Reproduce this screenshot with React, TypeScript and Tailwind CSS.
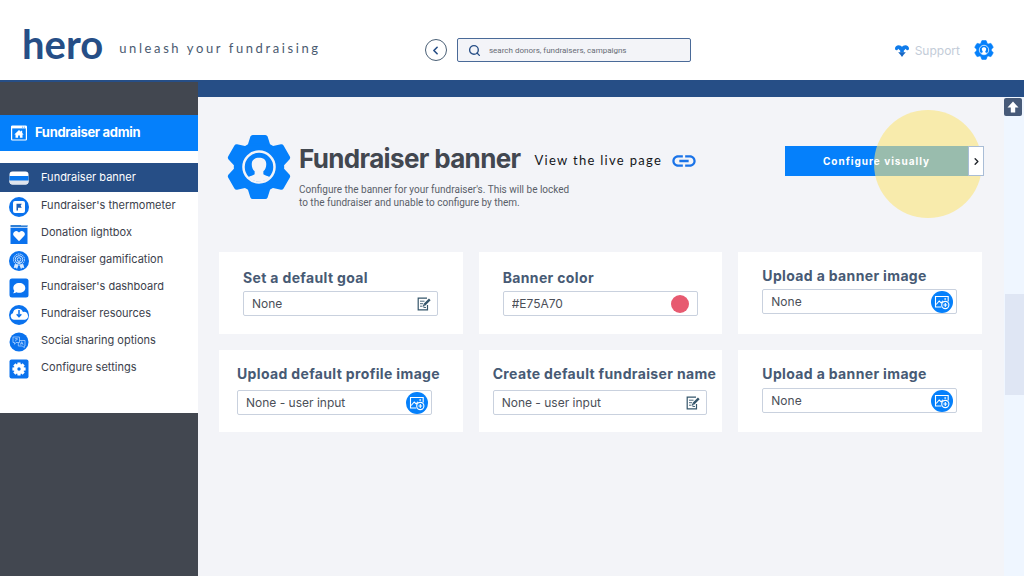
import { type ReactNode } from 'react'
import { ChevronLeft, ChevronRight, Search } from 'lucide-react'
import { MdLink } from 'react-icons/md'

// ─────────────────────────────────────────────────────────────
// Icons
// ─────────────────────────────────────────────────────────────

function UserGear({ className, face }: { className: string; face: string }) {
  const tooth = 'M-10.500-23 L-8-31 Q-7.500-32-6.500-32 L6.500-32 Q7.500-32 8-31 L10.500-23Z'
  return (
    <svg className={className} viewBox="-33 -34 66 68" aria-hidden="true">
      <g fill="#0580fb" stroke="#0580fb" strokeWidth="2" strokeLinejoin="round">
        <circle r="25" />
        {[0, 60, 120, 180, 240, 300].map((deg) => (
          <path key={deg} d={tooth} transform={`rotate(${deg})`} />
        ))}
      </g>
      <circle r="16" fill="none" stroke={face} strokeWidth="2.600" />
      <path
        fill={face}
        d="M-7.500-3 C-7.500-8-4-9.500 0-9.500 S7.500-8 7.500-3 C7.500 0 6.500 3 4.500 4.500 V7.500 C6 9 9 9 11 10.500 A16 16 0 0 1-11 10.500 C-9 9-6 9-4.500 7.500 V4.500 C-6.500 3-7.500 0-7.500-3Z"
      />
    </svg>
  )
}

function NavSvg({ children }: { children: ReactNode }) {
  return (
    <svg className="h-5 w-5 shrink-0" viewBox="0 0 20 20" fill="none" aria-hidden="true">
      {children}
    </svg>
  )
}

const bannerIcon = (
  <NavSvg>
    <rect x="0.500" y="3.500" width="19" height="13" rx="3" fill="#fff" />
    <path d="M.5 12h19v1.500a3 3 0 0 1-3 3h-13a3 3 0 0 1-3-3z" fill="#dfe5ee" />
    <path d="M.5 8h19v4.500H.5z" fill="#0a78ef" />
  </NavSvg>
)

const thermometerIcon = (
  <NavSvg>
    <circle cx="10" cy="10" r="10" fill="#0a72ee" />
    <rect x="4" y="4" width="12" height="12" rx="2" fill="#fff" />
    <path d="M7.500 13.500V6.800h5.300l-1.200 2 1.200 2H9v2.700z" fill="#1c5fb8" />
  </NavSvg>
)

const lightboxIcon = (
  <NavSvg>
    <path d="M1.500 1h17v2h-17z" fill="#2f7fd6" />
    <path d="M1.500 3.700h17V20h-17z" fill="#0a72ee" />
    <path d="M12.500 1.500h1M14.500 1.500h1M16.500 1.500h1" stroke="#fff" strokeWidth="0.800" />
    <path d="M10 17.200 5.200 12.300a3 3 0 0 1 4.200-4.300l.6.600.6-.6a3 3 0 0 1 4.200 4.300z" fill="#fff" />
  </NavSvg>
)

const awardIcon = (
  <NavSvg>
    <circle cx="10" cy="10" r="10" fill="#0a72ee" />
    <g stroke="#d9ebff" strokeWidth="0.900">
      <circle cx="10" cy="8.500" r="5.500" strokeDasharray="1.600 0.600" />
      <circle cx="10" cy="8.500" r="3.800" />
      <circle cx="10" cy="8.500" r="1.800" />
      <path d="M9.200 10.500v2.500M10.800 10.500v2.500" />
      <path d="M6.300 13l-1.100 3.600 1.700-.4.900 1.200 1.300-3.600M13.700 13l1.100 3.600-1.700-.4-.9 1.200-1.300-3.600" fill="#d9ebff" />
    </g>
  </NavSvg>
)

const chatIcon = (
  <NavSvg>
    <rect x="0.500" y="0.500" width="19" height="19" rx="2.500" fill="#0a72ee" />
    <path d="M10.300 5c3.400 0 6 2.100 6 4.900s-2.600 4.900-6 4.900c-1 0-2-.2-2.900-.6-.9.700-2 1.100-3.300 1.100.7-.8 1.100-1.600 1.200-2.500-.7-.8-1-1.800-1-2.900C4.300 7.100 6.900 5 10.300 5z" fill="#fff" />
  </NavSvg>
)

const cloudIcon = (
  <NavSvg>
    <circle cx="10" cy="10" r="10" fill="#0a72ee" />
    <path d="M4.800 14.700a3.300 3.300 0 0 1-.9-6.400 5.200 5.200 0 0 1 10-1.200 3.900 3.900 0 0 1 2.200 7.600z" fill="#fff" />
    <path d="M10 5v6M7.700 9.200l2.300 2.500 2.300-2.500" stroke="#0a72ee" strokeWidth="1.500" />
  </NavSvg>
)

const sharingIcon = (
  <NavSvg>
    <circle cx="10" cy="10" r="9.500" fill="#0a72ee" />
    <g stroke="#a9d0ff" strokeWidth="0.800">
      <path d="M4 5h6.500v5.500H7l-1.500 1.800v-1.800H4z" />
      <path d="M10.500 8.500H16V14h-.8v1.700L13.500 14H9.300v-3.500" />
      <path d="M5.800 6.800h3M7.200 6v.8M8.300 7c-.4 1-1.200 1.600-2.200 2M11.300 12.700l1.400-3 1.400 3M11.800 11.700h1.800" />
    </g>
  </NavSvg>
)

const settingsIcon = (
  <NavSvg>
    <rect x="0.500" y="0.500" width="19" height="19" rx="2" fill="#0a72ee" />
    <g fill="#fff">
      <circle cx="10" cy="10" r="5" />
      {[0, 45, 90, 135, 180, 225, 270, 315].map((deg) => (
        <path key={deg} d="M8.200 6l.3-2.600h3l.3 2.600z" transform={`rotate(${deg} 10 10)`} />
      ))}
    </g>
    <circle cx="10" cy="10" r="1.700" fill="#0a72ee" />
  </NavSvg>
)

function AdminIcon() {
  return (
    <svg className="h-4 w-4 shrink-0" viewBox="0 0 16 16" fill="none" aria-hidden="true">
      <rect x="0.600" y="1" width="14.800" height="14" rx="0.800" stroke="#fff" strokeWidth="1.200" />
      <path d="M.6 1h14.800v2.400H.6z" fill="#fff" />
      <path d="M11 2.200h.8M12.800 2.200h1" stroke="#0580fb" strokeWidth="0.800" />
      <path d="M8 5 3.300 9.400h1.200v3.400h2.600v-2.300h1.800v2.300h2.600V9.400h1.200l-1.500-1.400V5.800H9.800v.9z" fill="#fff" />
    </svg>
  )
}

function SupportIcon() {
  return (
    <svg className="h-3 w-3.5" viewBox="0 0 14 12" aria-hidden="true">
      <g fill="#0f7bea">
        <path d="M0 3.600C0 1.600 1.600.2 3.600.2 5.200.2 6.500.9 7 2 7.500.9 8.800.2 10.400.2c2 0 3.600 1.400 3.600 3.400 0 1-.6 1.600-1.500 1.600s-1.500-.6-1.700-1.500L9 5.500H5L3.200 3.700C3 4.600 2.400 5.200 1.500 5.200S0 4.600 0 3.600z" />
        <path d="M5.200 4.500h3.600v3H5.200z" />
      </g>
      <path d="M3.200 7.200h7.600L8.600 9.800 7 12 5.400 9.800z" fill="#1767c4" />
    </svg>
  )
}

function EditIcon() {
  return (
    <svg className="h-3.5 w-3.5" viewBox="0 0 14 14" fill="none" stroke="#35566b" aria-hidden="true">
      <path d="M10 1.200H1.200v11.600h9.300V8" strokeWidth="1.200" />
      <path d="M3 4.200h4.500M3 6.700h3M3 9.200h2M6.500 10.500h2.500" strokeWidth="0.900" />
      <path d="M12.800 2.300 7.300 7.900" strokeWidth="2.400" />
      <path d="M5.700 9.600l.8-2 1.300 1.300z" fill="#35566b" strokeWidth="0.400" />
    </svg>
  )
}

function ImageIcon() {
  return (
    <svg className="h-[22px] w-[22px]" viewBox="0 0 22 22" fill="none" stroke="#fff" aria-hidden="true">
      <circle cx="11" cy="11" r="11" fill="#0580fb" stroke="none" />
      <path d="M10.500 16H4.500V5.500h12.700v5" strokeWidth="1.100" />
      <path d="M5.200 13.500 8.200 10l2 2 1.600-2.200" strokeWidth="1.100" />
      <circle cx="14.200" cy="8" r="0.700" fill="#fff" strokeWidth="0.400" />
      <circle cx="14.300" cy="14" r="3.600" fill="#0580fb" strokeWidth="1.100" />
      <path d="M14.300 12.100v3.800M12.400 14h3.800" strokeWidth="1.100" />
    </svg>
  )
}

// ─────────────────────────────────────────────────────────────
// Data
// ─────────────────────────────────────────────────────────────

const navItems = [
  { label: 'Fundraiser banner', icon: bannerIcon, active: true },
  { label: "Fundraiser's thermometer", icon: thermometerIcon },
  { label: 'Donation lightbox', icon: lightboxIcon },
  { label: 'Fundraiser gamification', icon: awardIcon },
  { label: "Fundraiser's dashboard", icon: chatIcon },
  { label: 'Fundraiser resources', icon: cloudIcon },
  { label: 'Social sharing options', icon: sharingIcon },
  { label: 'Configure settings', icon: settingsIcon },
]

interface Setting {
  id: string
  title: string
  value: string
  action: 'edit' | 'image' | 'color'
  card: string
  field: string
}

const settings: Setting[] = [
  { id: 'goal', title: 'Set a default goal', value: 'None', action: 'edit', card: 'px-6 pt-4 gap-[3px]', field: 'w-[195px]' },
  { id: 'color', title: 'Banner color', value: '#E75A70', action: 'color', card: 'px-6 pt-4 gap-[3px]', field: 'w-[195px]' },
  { id: 'banner', title: 'Upload a banner image', value: 'None', action: 'image', card: 'px-6 pt-3.5 gap-[3px]', field: 'w-[195px]' },
  { id: 'profile', title: 'Upload default profile image', value: 'None - user input', action: 'image', card: 'px-4.5 pt-3.5 gap-1.5', field: 'w-[195px]' },
  { id: 'name', title: 'Create default fundraiser name', value: 'None - user input', action: 'edit', card: 'px-3.5 pt-3.5 gap-1.5', field: 'w-[214px]' },
  { id: 'banner-2', title: 'Upload a banner image', value: 'None', action: 'image', card: 'px-6 pt-3.5 gap-1', field: 'w-[195px]' },
]

// ─────────────────────────────────────────────────────────────
// Sections
// ─────────────────────────────────────────────────────────────

function Header() {
  return (
    <header className="flex h-20 items-center bg-white">
      <div className="flex w-[41.5%] items-center gap-4 pt-2 pl-[22px]">
        <span className="font-['Lato'] text-[40px] leading-[42px] font-bold text-[#264e86]">hero</span>
        <span className="pt-2.5 font-['Lato'] text-[13px] tracking-[0.2em] whitespace-nowrap text-[#4a5a70]">
          unleash your fundraising
        </span>
      </div>
      <div className="flex w-[26%] items-center gap-2.5 pt-5">
        <button
          type="button"
          aria-label="Back"
          className="flex h-[22px] w-[22px] shrink-0 items-center justify-center rounded-full border border-[#4a6076] text-[#264e86]"
        >
          <ChevronLeft size={13} strokeWidth={3} />
        </button>
        <label className="flex h-6 min-w-0 flex-1 items-center gap-2 rounded-[2px] border border-[#4a6a98] bg-[#f3f4f8] pl-2.5">
          <Search size={13} strokeWidth={2.5} className="shrink-0 text-[#264e86]" />
          <input
            type="search"
            aria-label="Search"
            placeholder="search donors, fundraisers, campaigns"
            className="min-w-0 flex-1 bg-transparent pt-0.5 font-['Roboto'] text-[8px] outline-none placeholder:text-[#666b74]"
          />
        </label>
      </div>
      <div className="ml-auto flex items-center gap-3.5 pt-5 pr-[30px]">
        <a href="#support" className="flex items-center gap-1.5 pt-0.5 text-xs text-[#c3ccd8]">
          <SupportIcon />
          Support
        </a>
        <button type="button" aria-label="Account settings">
          <UserGear className="h-5 w-5" face="#ffffff" />
        </button>
      </div>
    </header>
  )
}

function Sidebar() {
  return (
    <aside className="w-[198px] shrink-0 border-t-2 border-[#264e86] bg-[#424750]">
      <div className="mt-[33px] flex h-9 items-center gap-2 bg-[#0580fb] pl-[11px] text-[13px] font-bold tracking-tight text-white">
        <AdminIcon />
        Fundraiser admin
      </div>
      <nav className="bg-white pt-3 pb-8">
        <ul>
          {navItems.map((item) => (
            <li key={item.label}>
              <a
                href="#"
                aria-current={item.active ? 'page' : undefined}
                className={`flex items-center gap-3 pl-[9px] text-[11px] ${
                  item.active ? 'h-[29px] bg-[#264e86] text-white' : 'h-[27px] pt-0.5 text-[#3b414c]'
                }`}
              >
                {item.icon}
                <span className={item.active ? '' : 'pb-0.5'}>{item.label}</span>
              </a>
            </li>
          ))}
        </ul>
      </nav>
    </aside>
  )
}

function SettingAction({ setting }: { setting: Setting }) {
  if (setting.action === 'color') {
    return <button type="button" aria-label="Pick a color" className="mr-2 h-[18px] w-[18px] shrink-0 rounded-full bg-[#e75a70]" />
  }
  return (
    <button
      type="button"
      aria-label={setting.action === 'edit' ? 'Edit' : 'Upload image'}
      className={`shrink-0 ${setting.action === 'edit' ? 'mr-1.5' : 'mr-[3px]'}`}
    >
      {setting.action === 'edit' ? <EditIcon /> : <ImageIcon />}
    </button>
  )
}

function SettingCard({ setting }: { setting: Setting }) {
  return (
    <section className={`flex h-[82px] flex-col bg-white ${setting.card}`}>
      <label htmlFor={setting.id} className="text-sm leading-5 font-bold tracking-wide whitespace-nowrap text-[#475a74]">
        {setting.title}
      </label>
      <div className={`flex h-[25px] max-w-full items-center rounded-[2px] border border-[#c9d1de] bg-white ${setting.field}`}>
        <input
          id={setting.id}
          defaultValue={setting.value}
          className="min-w-0 flex-1 bg-transparent pl-2 text-xs text-[#4b4f58] outline-none"
        />
        <SettingAction setting={setting} />
      </div>
    </section>
  )
}

function PageTitle() {
  return (
    <div className="flex items-start">
      <UserGear className="ml-2 h-[66px] w-16 shrink-0" face="#f3f4f8" />
      <div className="ml-2 pt-[9px]">
        <div className="flex items-center gap-3.5">
          <h1 className="text-[26px] leading-8 font-bold tracking-tight whitespace-nowrap text-[#424750]">Fundraiser banner</h1>
          <a href="#live" className="flex items-center gap-2 pt-1 font-['Lato'] text-[13px] tracking-widest whitespace-nowrap text-[#14161a]">
            View the live page
            <MdLink size={28} color="#1a73e8" />
          </a>
        </div>
        <p className="mt-2 font-['Roboto'] text-[10px] leading-[13px] text-[#5a5f69]">
          Configure the banner for your fundraiser's. This will be locked
          <br />
          to the fundraiser and unable to configure by them.
        </p>
      </div>
      <button
        type="button"
        className="relative mt-3 ml-auto flex h-[30px] w-[199px] shrink-0 items-center bg-[#0580fb] text-[10px] font-bold text-white"
      >
        <span className="pointer-events-none absolute -top-9 right-0.5 h-[108px] w-[108px] rounded-full bg-[#fbe47a]/60" />
        <span className="relative flex-1 tracking-widest">Configure visually</span>
        <span className="relative flex h-full w-4 items-center justify-center border border-[#a9bdd6] bg-white text-[#22262c]">
          <ChevronRight size={11} strokeWidth={3} className="shrink-0" />
        </span>
      </button>
    </div>
  )
}

function ScrollRail() {
  return (
    <div className="flex w-5 shrink-0 flex-col bg-[#eff6ff]">
      <button type="button" aria-label="Scroll to top" className="mt-px flex h-[18px] w-[18px] items-center justify-center rounded-[2px] bg-[#475a78]">
        <svg className="h-3 w-3" viewBox="0 0 12 12" fill="#fff" aria-hidden="true">
          <path d="M6 .5 11.500 6.500H8.200v5H3.800v-5H.5z" />
        </svg>
      </button>
      <div className="mt-[178px] ml-px h-[101px] bg-[#dfe6f4]" />
    </div>
  )
}

export default function App() {
  return (
    <div className="flex min-h-screen flex-col bg-[#f3f4f8] font-['Inter',sans-serif]">
      <Header />
      <div className="flex flex-1">
        <Sidebar />
        <div className="flex min-w-0 flex-1 flex-col">
          <div className="h-[17px] bg-[#264e86]" />
          <div className="flex flex-1">
            <main className="min-w-0 flex-1 pt-[37px] pl-[21px]">
              <div className="pr-5">
                <PageTitle />
              </div>
              <div className="mt-[43px] grid grid-cols-3 gap-4 pr-[22px]">
                {settings.map((setting) => (
                  <SettingCard key={setting.id} setting={setting} />
                ))}
              </div>
            </main>
            <ScrollRail />
          </div>
        </div>
      </div>
    </div>
  )
}
